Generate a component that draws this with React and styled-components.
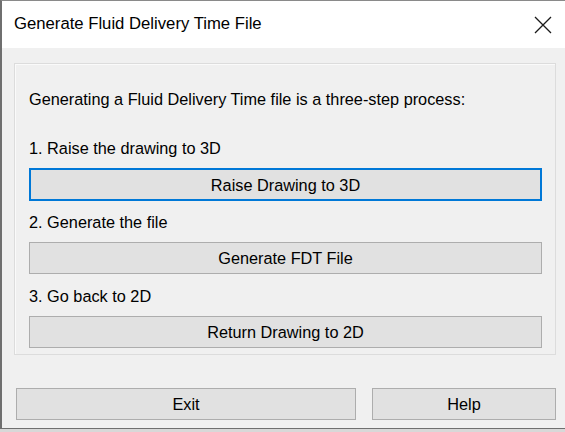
import styled, { createGlobalStyle } from 'styled-components'

const Global = createGlobalStyle`
  html, body {
    margin: 0;
    padding: 0;
    background: #ffffff;
  }
  body {
    font-family: "Liberation Sans", Arial, sans-serif;
    overflow: hidden;
  }
`

const Screen = styled.div`
  width: 565px;
  height: 432px;
  background: #d8d8d8;
`

const Window = styled.div`
  width: 563px;
  height: 427px;
  border-top: 1px solid #8a8a8a;
  border-left: 2px solid #6f6f6f;
  border-bottom: 1px solid #6f6f6f;
  background: #f0f0f0;
  display: flex;
  flex-direction: column;
`

const TitleBar = styled.div`
  height: 47px;
  background: #ffffff;
  display: flex;
  align-items: center;
  justify-content: space-between;
  padding: 0 12px 0 12px;
`

const Title = styled.span`
  font-size: 16.7px;
  color: #000;
  margin-top: -1px;
`

const CloseIcon = styled.svg`
  width: 18px;
  height: 18px;
  margin-right: 1px;
`

const Body = styled.div`
  flex: 1;
  padding: 15px 9px 0 12px;
  display: flex;
  flex-direction: column;
`

const Group = styled.div`
  border: 1px solid #dcdcdc;
  box-shadow: inset 1px 1px 0 #fafafa;
  padding: 25px 13px 6px 14px;
  display: flex;
  flex-direction: column;
`

const Label = styled.div`
  font-size: 16.3px;
  line-height: 20px;
  height: 20px;
  color: #000;
  margin-top: ${p => p.$gap || 0}px;
  white-space: nowrap;
`

const Button = styled.button`
  font-family: "Liberation Sans", Arial, sans-serif;
  font-size: 16.3px;
  color: #000;
  background: #e1e1e1;
  border: ${p => (p.$focused ? '2px solid #0078d7' : '1px solid #adadad')};
  height: ${p => p.$h || 32}px;
  width: ${p => p.$w || '100%'};
  margin-top: ${p => p.$gap || 0}px;
  padding: 1px 0 0;
  border-radius: 0;
  display: flex;
  align-items: center;
  justify-content: center;
  outline: none;
`

const Footer = styled.div`
  display: flex;
  gap: 16px;
  margin-top: 33px;
  padding-left: 2px;
`

export default function App() {
  return (
    <>
      <Global />
      <Screen>
        <Window>
          <TitleBar>
            <Title>Generate Fluid Delivery Time File</Title>
            <CloseIcon viewBox="0 0 18 18">
              <path d="M1 1 L17 17 M17 1 L1 17" stroke="#1a1a1a" strokeWidth="1.3" fill="none" />
            </CloseIcon>
          </TitleBar>
          <Body>
            <Group>
              <Label>Generating a Fluid Delivery Time file is a three-step process:</Label>
              <Label $gap={29}>1. Raise the drawing to 3D</Label>
              <Button $focused $h={33} $gap={10}>Raise Drawing to 3D</Button>
              <Label $gap={11}>2. Generate the file</Label>
              <Button $gap={10}>Generate FDT File</Button>
              <Label $gap={12}>3. Go back to 2D</Label>
              <Button $gap={10}>Return Drawing to 2D</Button>
            </Group>
            <Footer>
              <Button $w="340px">Exit</Button>
              <Button $w="184px">Help</Button>
            </Footer>
          </Body>
        </Window>
      </Screen>
    </>
  )
}
